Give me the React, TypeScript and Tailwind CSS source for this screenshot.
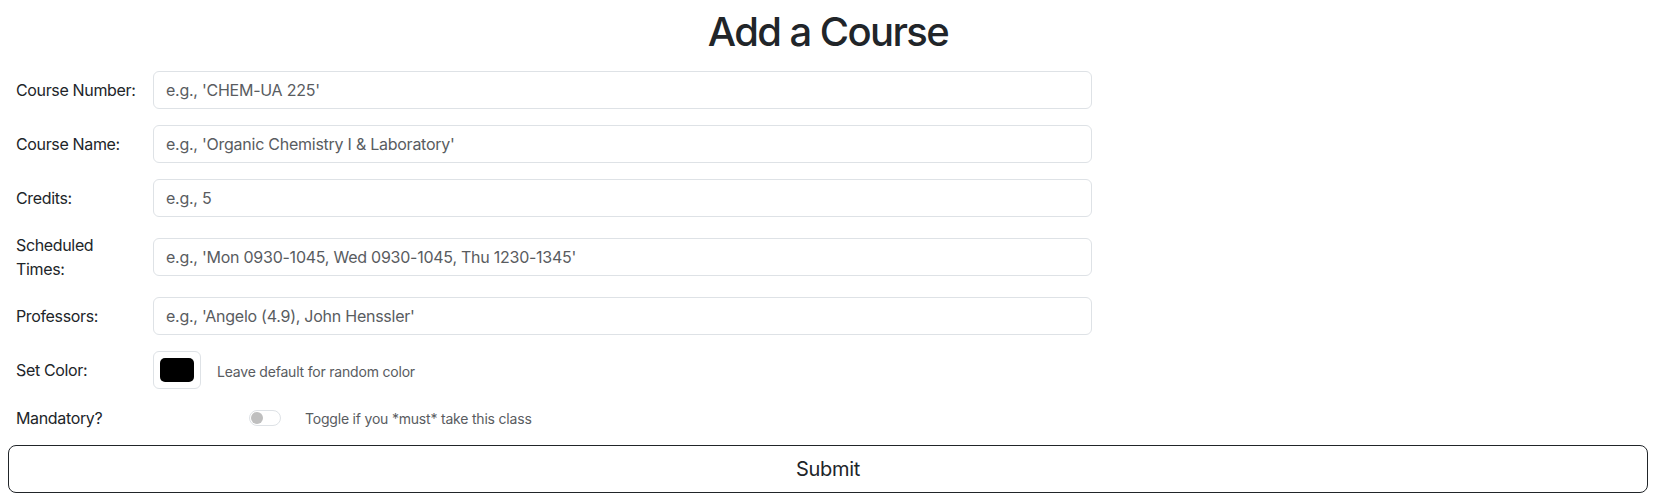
import React from "react";

const fields: { label: React.ReactNode; placeholder: string }[] = [
  { label: "Course Number:", placeholder: "e.g., 'CHEM-UA 225'" },
  { label: "Course Name:", placeholder: "e.g., 'Organic Chemistry I & Laboratory'" },
  { label: "Credits:", placeholder: "e.g., 5" },
  {
    label: (
      <>
        Scheduled
        <br />
        Times:
      </>
    ),
    placeholder: "e.g., 'Mon 0930-1045, Wed 0930-1045, Thu 1230-1345'",
  },
  { label: "Professors:", placeholder: "e.g., 'Angelo (4.9), John Henssler'" },
];

export default function App() {
  return (
    <div className="px-2 pt-2 bg-white text-[#212529] font-['Inter','Liberation_Sans',sans-serif]">
      <h1 className="text-center text-[40px] font-medium leading-[48px] tracking-[-1.6px] mb-[15px]">Add a Course</h1>
      <form className="pl-2" onSubmit={(e) => e.preventDefault()}>
        {fields.map((f, i) => (
          <div key={i} className="flex items-center mb-4">
            <label className="w-[137px] shrink-0 text-base leading-6 tracking-[-0.35px]">{f.label}</label>
            <input
              type="text"
              placeholder={f.placeholder}
              className="w-[939px] h-[38px] border border-[#dee2e6] rounded-[6px] px-3 text-base leading-6 tracking-[-0.25px] outline-none placeholder:text-[#595c5f]"
            />
          </div>
        ))}
        <div className="flex items-center mb-4">
          <label className="w-[137px] shrink-0 text-base leading-6 tracking-[-0.35px]">Set Color:</label>
          <div className="w-[48px] h-[38px] border border-[#dee2e6] rounded-[6px] p-[6px] shrink-0">
            <div className="w-full h-full bg-black rounded-[5px]" />
          </div>
          <span className="ml-4 mt-1 text-sm leading-5 tracking-[-0.2px] text-[#595c5f]">Leave default for random color</span>
        </div>
        <div className="flex items-center mb-[15px] pt-[1px]">
          <label className="w-[137px] shrink-0 text-base leading-6 tracking-[-0.35px]">Mandatory?</label>
          <div className="ml-[96px] w-[32px] h-[16px] rounded-full border border-[#dee2e6] flex items-center pl-[1px] shrink-0">
            <div className="w-[12px] h-[12px] rounded-full bg-[#bfbfbf]" />
          </div>
          <span className="ml-6 mt-[2px] text-sm leading-5 tracking-[-0.2px] text-[#595c5f]">Toggle if you *must* take this class</span>
        </div>
      </form>
      <button
        type="button"
        className="w-full h-[48px] border border-[#212529] rounded-lg text-[20px] leading-[30px] tracking-[-0.3px] text-[#212529] bg-white"
      >
        Submit
      </button>
    </div>
  );
}
